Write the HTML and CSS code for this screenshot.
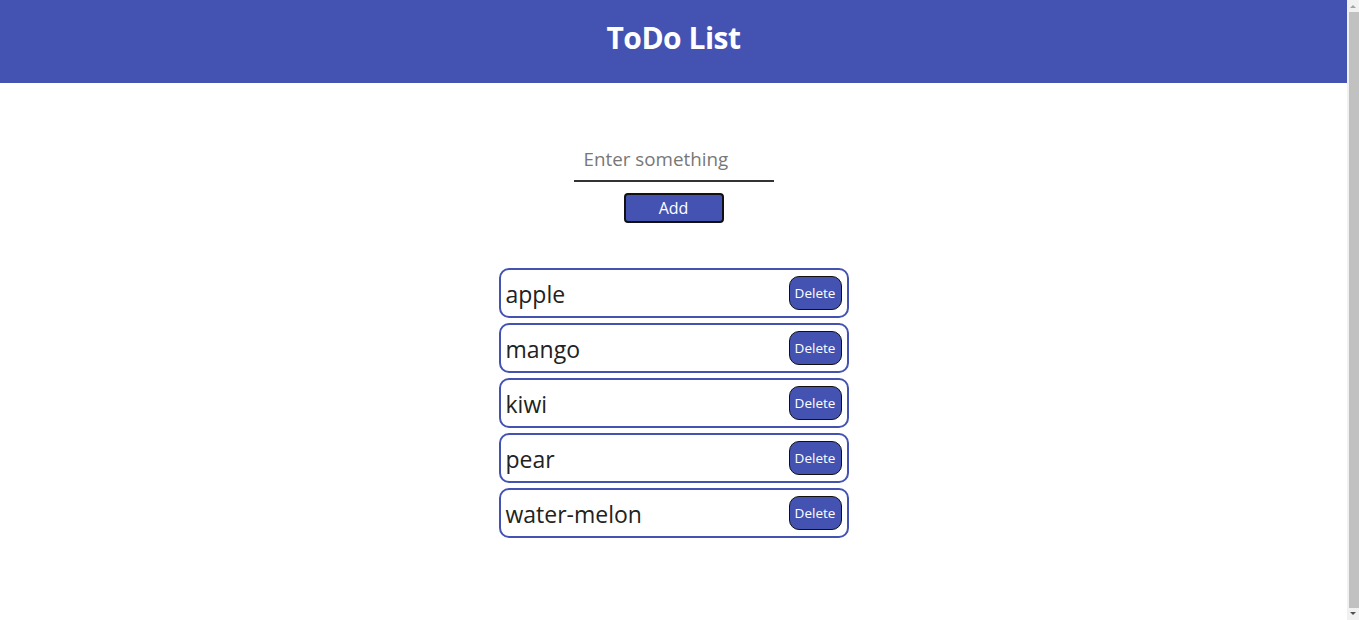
FILE: index.html
```html
<!DOCTYPE html>
<html>
<head>
<meta charset="utf-8">
<title>ToDo List</title>
<link rel="stylesheet" href="styles.css">
</head>
<body>
<div class="page">
  <header class="header"><h1 class="title">ToDo List</h1></header>
  <main class="main">
    <div class="form">
      <input class="input" type="text" placeholder="Enter something">
      <button class="add-btn">Add</button>
    </div>
    <ul class="list">
      <li class="item"><span class="item-text">apple</span><button class="del-btn">Delete</button></li>
      <li class="item"><span class="item-text">mango</span><button class="del-btn">Delete</button></li>
      <li class="item"><span class="item-text">kiwi</span><button class="del-btn">Delete</button></li>
      <li class="item"><span class="item-text">pear</span><button class="del-btn">Delete</button></li>
      <li class="item"><span class="item-text">water-melon</span><button class="del-btn">Delete</button></li>
    </ul>
  </main>
</div>
<div class="scrollbar">
  <svg class="arrow" width="12" height="12" viewBox="0 0 12 12"><path d="M3 8 L6 5 L9 8 Z" fill="#a3a3a3"/></svg>
  <div class="thumb"></div>
  <svg class="arrow" width="12" height="12" viewBox="0 0 12 12"><path d="M3 4 L6 7 L9 4 Z" fill="#505050"/></svg>
</div>
</body>
</html>
```
FILE: styles.css
```css
html, body {
  margin: 0;
  padding: 0;
  overflow: hidden;
}
body {
  font-family: "Open Sans", "Noto Sans", sans-serif;
  color: #222;
  display: flex;
  height: 620px;
}
.page {
  flex: 1;
  min-width: 0;
}
.scrollbar {
  width: 12px;
  height: 620px;
  background: #f1f1f1;
  display: flex;
  flex-direction: column;
  align-items: center;
}
.arrow {
  flex: none;
  display: block;
}
.thumb {
  flex: 1;
  width: 10px;
  margin-left: 1px;
  background: #c1c1c1;
}
.header {
  background: #4453b2;
  height: 83px;
  display: flex;
  align-items: center;
  justify-content: center;
}
.title {
  margin: 0;
  color: #fff;
  font-size: 30px;
  font-weight: 700;
  letter-spacing: -0.5px;
  padding-bottom: 8px;
}
.main {
  display: flex;
  flex-direction: column;
  align-items: center;
}
.form {
  margin-top: 58px;
  display: flex;
  flex-direction: column;
  align-items: center;
}
.input {
  width: 200px;
  height: 41px;
  box-sizing: border-box;
  border: none;
  border-bottom: 2px solid #333;
  padding: 0 10px 4px;
  font-family: inherit;
  font-size: 18.8px;
  outline: none;
  background: transparent;
}
.input::placeholder {
  color: #777;
}
.add-btn {
  margin-top: 11px;
  width: 100px;
  height: 30px;
  box-sizing: border-box;
  background: #4453b2;
  color: #fff;
  border: 2px solid #111;
  border-radius: 4px;
  font-family: inherit;
  font-size: 16px;
  padding: 0;
}
.list {
  list-style: none;
  margin: 45px 0 0;
  padding: 0;
  display: flex;
  flex-direction: column;
  gap: 5px;
}
.item {
  width: 350px;
  height: 50px;
  box-sizing: border-box;
  border: 2px solid #4453b2;
  border-radius: 10px;
  display: flex;
  align-items: center;
  justify-content: space-between;
  padding: 0 5px;
}
.item-text {
  font-size: 23px;
  padding-top: 2px;
}
.del-btn {
  width: 53px;
  height: 34px;
  box-sizing: border-box;
  background: #4453b2;
  color: #fff;
  border: 1px solid #111;
  border-radius: 10px;
  font-family: inherit;
  font-size: 13.5px;
  padding: 0;
}
```
